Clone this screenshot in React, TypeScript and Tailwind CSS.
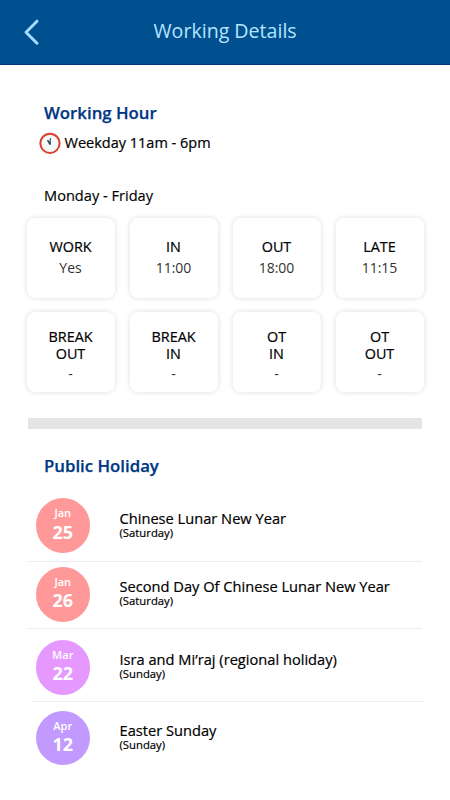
const shifts = [
  { lines: ['WORK'], value: 'Yes' },
  { lines: ['IN'], value: '11:00' },
  { lines: ['OUT'], value: '18:00' },
  { lines: ['LATE'], value: '11:15' },
  { lines: ['BREAK', 'OUT'], value: '-' },
  { lines: ['BREAK', 'IN'], value: '-' },
  { lines: ['OT', 'IN'], value: '-' },
  { lines: ['OT', 'OUT'], value: '-' },
];

const holidays = [
  { month: 'Jan', day: '25', name: 'Chinese Lunar New Year', weekday: '(Saturday)', color: 'bg-[#ff9999]', row: 'h-[69px] pt-[6px]', text: 'pt-[12px]', dayLine: 'leading-[22px]', line: 'ml-7 w-[394px]' },
  { month: 'Jan', day: '26', name: 'Second Day Of Chinese Lunar New Year', weekday: '(Saturday)', color: 'bg-[#ff9999]', row: 'h-[66px] pt-[5px]', text: 'pt-[11px]', dayLine: 'leading-[20px]', line: 'ml-7 w-[394px]' },
  { month: 'Mar', day: '22', name: 'Isra and Mi’raj (regional holiday)', weekday: '(Sunday)', color: 'bg-[#e599ff]', row: 'h-[72px] pt-[11px]', text: 'pt-[11px]', dayLine: 'leading-[20px]', line: 'ml-8 w-[393px]' },
  { month: 'Apr', day: '12', name: 'Easter Sunday', weekday: '(Sunday)', color: 'bg-[#c299ff]', row: 'h-[72px] pt-[8.5px]', text: 'pt-[11.5px]', dayLine: 'leading-[20px]', line: '' },
];

function Header() {
  return (
    <header className="flex h-[65px] items-center border-b border-[#003c7a] bg-[#00508f] text-[#b5e4ff]">
      <svg className="ml-[22px] h-7 w-[18px]" viewBox="0 0 18 28" fill="none" stroke="#a5dcff" strokeWidth="3" strokeLinecap="round" strokeLinejoin="round">
        <path d="M15 3.2 L4 14.2 L15 25.2" />
      </svg>
      <h1 className="-mt-[3px] ml-[113.5px] text-[19.6px] leading-7 whitespace-nowrap">Working Details</h1>
    </header>
  );
}

function Clock() {
  return (
    <svg className="h-[22px] w-[22px]" viewBox="0 0 22 22" fill="none" strokeLinecap="round">
      <circle cx="11" cy="11.3" r="9.6" fill="#f6fafb" stroke="#d9402f" strokeWidth="2" />
      <path d="M11.3 6.5 L11.2 12" stroke="#1d4257" strokeWidth="1.1" />
      <path d="M8.9 8.8 L11 12" stroke="#1d4257" strokeWidth="1.6" />
    </svg>
  );
}

export default function App() {
  return (
    <main className="h-[800px] w-[450px] overflow-hidden bg-white font-['Open_Sans',sans-serif] text-black">
      <Header />
      <section className="pt-[36px]">
        <h2 className="ml-11 text-[16.8px] leading-6 font-semibold text-[#003784] [-webkit-text-stroke:0.25px]">Working Hour</h2>
        <div className="mt-[7px] ml-[39px] flex h-[22px] items-center">
          <Clock />
          <span className="ml-[3.5px] text-[14.5px] leading-5 [-webkit-text-stroke:0.2px]">Weekday 11am - 6pm</span>
        </div>
        <p className="mt-[31px] ml-11 text-[14.6px] leading-5 [-webkit-text-stroke:0.15px]">Monday - Friday</p>
        <div className="mt-[13px] ml-[26.5px] grid w-[397px] grid-cols-4 gap-x-[15px] gap-y-[14px]">
          {shifts.map((s) => (
            <div key={s.lines.join(' ')} className={`flex h-[80px] flex-col items-center rounded-lg bg-white text-[14px] shadow-[0_0_4px_1px_rgba(0,0,0,0.1)] ${s.lines.length > 1 ? 'pt-[16px]' : 'pt-[20px]'}`}>
              {s.lines.map((l) => (
                <span key={l} className="text-[14.4px] leading-[17px] [-webkit-text-stroke:0.2px]">{l}</span>
              ))}
              <span className={`leading-5 text-[#333] ${s.lines.length > 1 ? 'mt-[2px]' : 'mt-[3px]'}`}>{s.value}</span>
            </div>
          ))}
        </div>
      </section>
      <div className="mt-[26px] ml-[28px] h-[11px] w-[394px] bg-[#e5e5e6]" />
      <section className="pt-[25px]">
        <h2 className="ml-11 text-[16.8px] leading-6 font-semibold text-[#003784] [-webkit-text-stroke:0.25px]">Public Holiday</h2>
        <ul className="mt-[14px]">
          {holidays.map((h) => (
            <li key={h.name}>
              <div className={`flex ${h.row}`}>
                <div className={`ml-[35.5px] flex h-[54.5px] w-[54.5px] flex-col items-center rounded-full pt-[7px] text-white ${h.color}`}>
                  <span className="text-[11px] leading-4 font-semibold">{h.month}</span>
                  <span className={`text-[18px] font-bold ${h.dayLine}`}>{h.day}</span>
                </div>
                <div className={`ml-[29.5px] whitespace-nowrap [-webkit-text-stroke:0.2px] ${h.text}`}>
                  <p className="text-[14.65px] leading-4">{h.name}</p>
                  <p className="mt-px text-[11.3px] leading-[11px]">{h.weekday}</p>
                </div>
              </div>
              {h.line && <div className={`h-px bg-[#ececec] ${h.line}`} />}
            </li>
          ))}
        </ul>
      </section>
    </main>
  );
}
